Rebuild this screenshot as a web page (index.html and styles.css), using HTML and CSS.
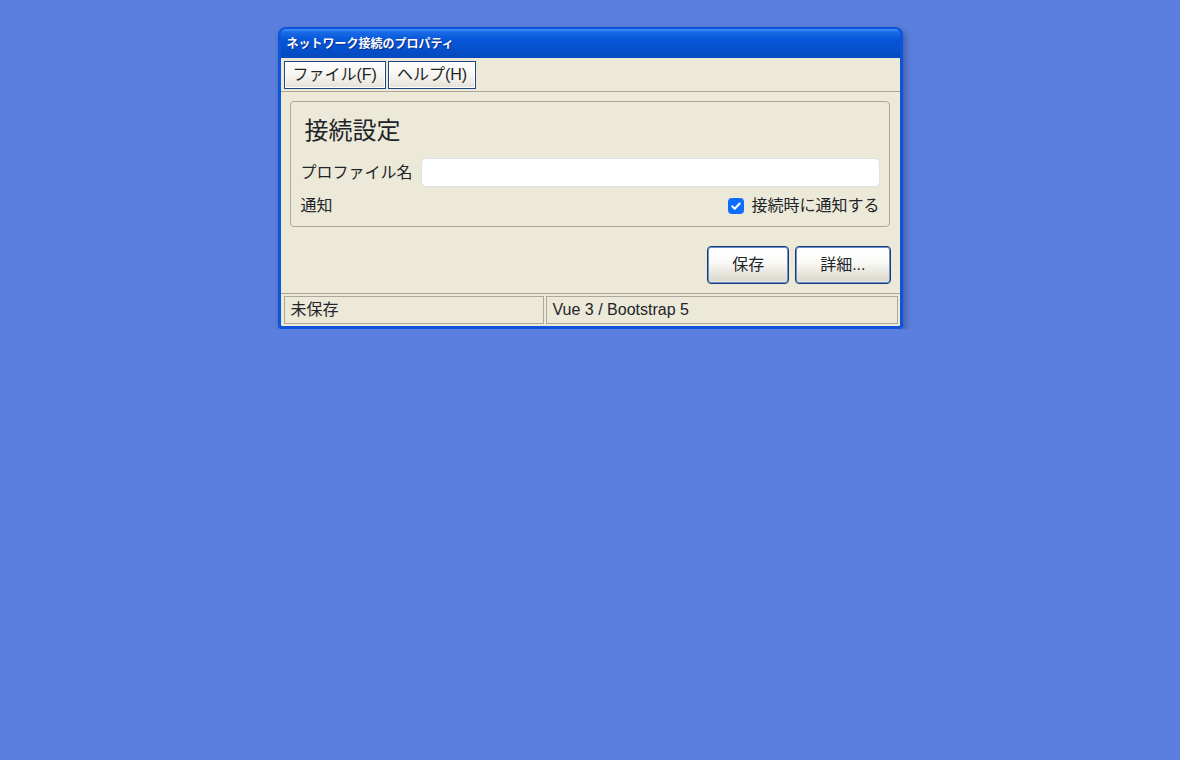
FILE: index.html
```html
<!DOCTYPE html>
<html lang="ja">
    <head>
        <meta charset="utf-8"/>
        <title>ネットワーク接続のプロパティ</title>
        <link rel="stylesheet" href="styles.css">
    </head>

    <body>
        <div class="window">
            <div class="title-bar">ネットワーク接続のプロパティ</div>

            <div class="menu-bar">
                <button class="menu-item">ファイル(F)</button>
                <button class="menu-item">ヘルプ(H)</button>
            </div>

            <div class="content">
                <div class="group">
                    <div class="group-title">接続設定</div>
                    <div class="form-row">
                        <label class="row-label" for="profile">プロファイル名</label>
                        <input class="text-input" id="profile" type="text">
                    </div>
                    <div class="form-row row-check">
                        <span class="row-label">通知</span>
                        <label class="check">
                            <span class="check-box">
                                <svg width="16" height="16" viewBox="0 0 16 16">
                                    <path d="M4.2 8.3l2.5 2.4 5-5.2" fill="none" stroke="#fff" stroke-width="2" stroke-linecap="round" stroke-linejoin="round"/>
                                </svg>
                            </span>
                            接続時に通知する
                        </label>
                    </div>
                </div>

                <div class="actions">
                    <button class="xp-btn">保存</button>
                    <button class="xp-btn">詳細...</button>
                </div>
            </div>

            <div class="status-bar">
                <div class="pane pane-first">未保存</div>
                <div class="pane pane-rest">Vue 3 / Bootstrap 5</div>
            </div>
        </div>
    </body>
</html>
```

FILE: styles.css
```css
body {
    margin: 0; padding-top: 27px;
    background-color: #5b7fde;
    font-family: "Liberation Sans", "Noto Sans CJK JP", sans-serif;
    font-size: 16px; color: #212529;
}

.window {
    width: 619px; margin: 0 auto;
    border: 3px solid #0b55dc; border-radius: 8px 8px 4px 4px;
    background-color: #ece9d8;
    box-shadow: 2px 3px 7px rgba(0, 0, 0, 0.3);
}

/* title */
.title-bar {
    height: 28px; line-height: 28px; padding-left: 6px;
    margin-top: -1px; padding-top: 1px; border-radius: 5px 5px 0 0;
    background: linear-gradient(#4a93f7 0, #1b6ce8 3px, #0757da 35%, #0449bf 100%);
    color: #fff; font-size: 12px; font-weight: bold;
    text-shadow: 1px 1px 0 #0a2f8a;
}

/* menu */
.menu-bar {
    display: flex; gap: 2px;
    padding: 3px 4px 2px 3px;
    border-bottom: 1px solid #aca899;
}
.menu-item {
    height: 28px; padding: 0 8px; margin: 0;
    font: inherit; line-height: 24px; color: #212529;
    border: 1px solid #1c4784; border-radius: 0;
    box-shadow: inset 0 0 0 1px #fff;
    background: linear-gradient(#ffffff 0%, #f6f5f0 50%, #e4e1d6 100%);
}

.content { padding: 9px 10px 9px 9px; }

.group {
    border: 1px solid #aca899; border-radius: 4px;
    padding: 14px 9px 8px 10px;
}
.group-title {
    margin-left: 4px; margin-bottom: 13px;
    font-size: 24px; line-height: 29px;
}
.form-row {
    display: flex; align-items: center; gap: 8px;
}
.row-label { line-height: 24px; }
.text-input {
    flex: 1; height: 29px; box-sizing: border-box;
    border: 1px solid #dee2e6; border-radius: 5px;
    background-color: #fff; padding: 0 10px; font: inherit;
}
.row-check {
    margin-top: 7px; justify-content: space-between;
}
.check {
    display: flex; align-items: center; gap: 7px; line-height: 24px;
}
.check-box {
    display: block; width: 16px; height: 16px;
    background-color: #0d6efd; border-radius: 4px;
}
.check-box svg { display: block; }

.actions {
    display: flex; justify-content: flex-end; gap: 6px;
    margin-top: 19px; margin-right: -1px;
}
.xp-btn {
    height: 38px; padding: 0 24px; margin: 0;
    font: inherit; color: #212529; line-height: 24px;
    border: 1px solid #163a73; border-radius: 4px;
    box-shadow: inset 0 0 0 1px #6b90cc;
    background: linear-gradient(#ffffff 0%, #fbfbf9 40%, #e9e7df 70%, #dcd9ce 92%, #f2f1ec 100%);
}

/* status */
.status-bar {
    display: flex; gap: 2px;
    border-top: 1px solid #aca899;
    padding: 2px 2px 2px 3px;
}
.pane {
    height: 28px; box-sizing: border-box;
    border: 1px solid #aca899;
    padding: 0 6px; line-height: 26px;
}
.pane-first { width: 260px; }
.pane-rest { flex: 1; }
```
